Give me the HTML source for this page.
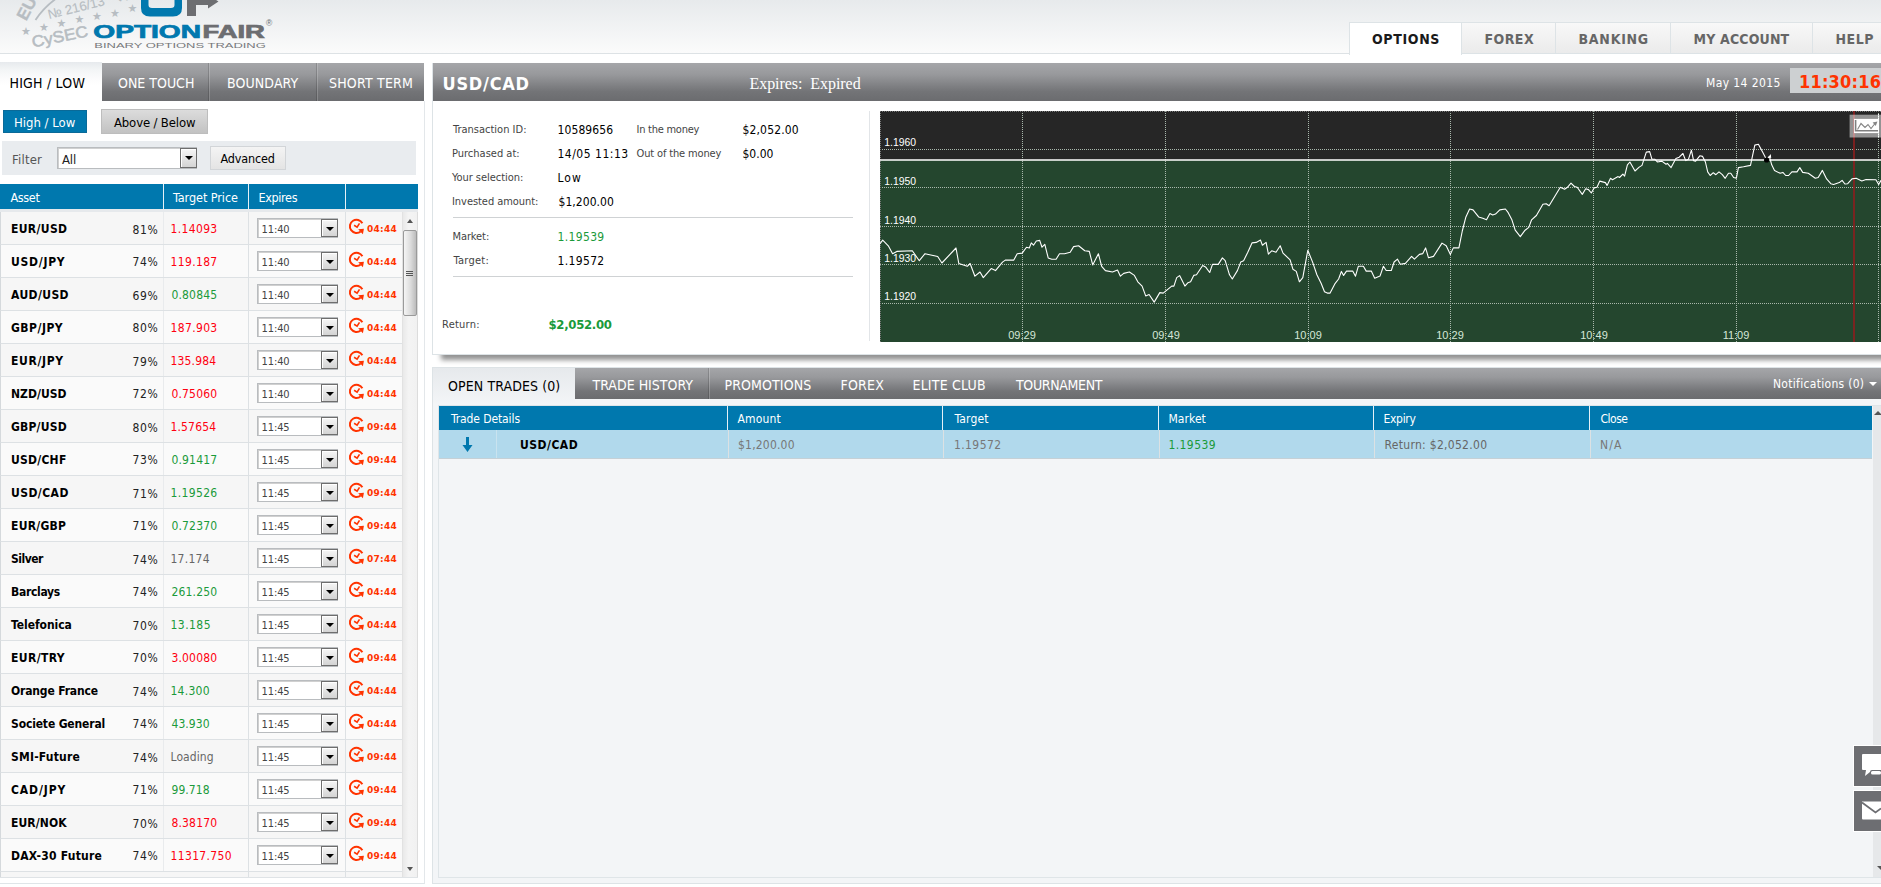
<!DOCTYPE html>
<html><head><meta charset="utf-8"><title>OptionFair</title>
<style>
*{box-sizing:border-box;margin:0;padding:0}
html,body{width:1881px;height:887px;overflow:hidden;background:#fff}
body{position:relative;font-family:'DejaVu Sans Condensed','DejaVu Sans','Liberation Sans',sans-serif;font-size:12px;color:#000}
.a{position:absolute;white-space:pre;line-height:1}
.hdr{left:0;top:0;width:1881px;height:53px;background:linear-gradient(#e7eaec,#fbfbfb)}
.hline{left:0;top:53px;width:1881px;height:1px;background:#dde2e5}
.nt{top:22px;height:32px;border:1px solid #dde3e6;border-left:none;background:linear-gradient(#f8f8f8,#ebebeb)}
.nt.act{background:#fff;border-left:1px solid #dde3e6;border-bottom:none;height:33px}
.dk{background:linear-gradient(#a5a6a9,#98999c 30%,#737477 75%,#6b6c6f)}
.th{background:#0078ae}
.row{left:0;width:402px;height:33px;background:#f6f6f6;border-bottom:1px solid #dde1e4;border-left:1px solid #d5d9dc}
.row.alt{background:#fafafa}
.vl{width:1px;background:#dde1e4}
.sel{background:#fff;border:1px solid #b9bcbf;box-shadow:inset 1px 1px 0 #d0d0d0}
.dd{background:linear-gradient(#f6f6f6,#d4d4d4);border:1px solid #6e6e6e;box-shadow:inset 1px 1px 0 #fff}
.dd:after{content:"";position:absolute;left:4px;top:7px;border:4px solid transparent;border-top:4px solid #000;border-bottom:none}
</style></head>
<body>
<div class="a hdr"></div><div class="a hline"></div>
<svg class="a" style="left:0;top:0" width="300" height="53" viewBox="0 0 300 53">
<g fill="#b7bdc2" stroke="#b7bdc2" font-family="'Liberation Sans',sans-serif">
<text font-size="17" font-weight="bold" stroke-width="0.3" transform="translate(26.3,21.6) rotate(-62)">EU</text>
<path d="M35.5 20 Q44 7 57 -2" stroke-width="1.8" fill="none"/>
<text font-size="13" stroke-width="0.15" transform="translate(49,19) rotate(-14)" textLength="58" lengthAdjust="spacingAndGlyphs">№ 216/13</text>
<text font-size="16" stroke-width="0.55" transform="translate(33,47.5) rotate(-11.5)" textLength="57" lengthAdjust="spacingAndGlyphs">CySEC</text>
<g stroke="none"><text x="26" y="35" font-size="11" text-anchor="middle" font-family="'DejaVu Sans',sans-serif">★</text><text x="44" y="31" font-size="11" text-anchor="middle" font-family="'DejaVu Sans',sans-serif">★</text><text x="61.5" y="27" font-size="11" text-anchor="middle" font-family="'DejaVu Sans',sans-serif">★</text><text x="79.5" y="23" font-size="11" text-anchor="middle" font-family="'DejaVu Sans',sans-serif">★</text><text x="97" y="20" font-size="11" text-anchor="middle" font-family="'DejaVu Sans',sans-serif">★</text><text x="115" y="16.5" font-size="11" text-anchor="middle" font-family="'DejaVu Sans',sans-serif">★</text><text x="132.5" y="12" font-size="11" text-anchor="middle" font-family="'DejaVu Sans',sans-serif">★</text></g>
<text font-size="15" font-weight="bold" stroke="none" transform="translate(118,0) rotate(28)">F</text>
</g>
<path d="M141 -10 V8 Q141 16.5 150 16.5 H173 Q182 16.5 182 8 V-10 H174.5 V5 Q174.5 8 171 8 H152 Q148.5 8 148.5 5 V-10 Z" fill="#0078ae"/>
<path d="M187 -3 H208 V-5 L218.5 1.5 L208 8.5 V5 H196 V16 H187 Z" fill="#6d6e71"/>
<g font-family="'Liberation Sans',sans-serif" font-weight="bold">
<text x="0" y="0" font-size="17.6" fill="#0078ae" stroke="#0078ae" stroke-width="0.7" transform="translate(93.3,37.6) scale(1.36,1)" textLength="79.2" lengthAdjust="spacingAndGlyphs">OPTION</text>
<text x="0" y="0" font-size="17.6" fill="#6d6e71" stroke="#6d6e71" stroke-width="0.7" transform="translate(202.4,37.6) scale(1.36,1)" textLength="45.9" lengthAdjust="spacingAndGlyphs">FAIR</text>
</g>
<text x="266" y="25.5" font-size="8.5" fill="#6d6e71" font-family="'Liberation Sans',sans-serif">®</text>
<text x="0" y="0" font-size="7.6" fill="#77787b" font-family="'Liberation Sans',sans-serif" transform="translate(94.3,47.5) scale(1.45,1)" textLength="118.3" lengthAdjust="spacingAndGlyphs">BINARY OPTIONS TRADING</text>
</svg>
<div class="a nt act" style="left:1349px;width:113px"></div>
<div class="a" style="left:1372px;top:32px;font-size:14px;color:#1a1a1a;font-weight:bold;letter-spacing:0.65px">OPTIONS</div>
<div class="a nt" style="left:1462px;width:94px"></div>
<div class="a" style="left:1484.5px;top:32px;font-size:14px;color:#666;font-weight:bold;letter-spacing:0.45px">FOREX</div>
<div class="a nt" style="left:1556px;width:115px"></div>
<div class="a" style="left:1578.5px;top:32px;font-size:14px;color:#666;font-weight:bold;letter-spacing:0.75px">BANKING</div>
<div class="a nt" style="left:1671px;width:142px"></div>
<div class="a" style="left:1693.5px;top:32px;font-size:14px;color:#666;font-weight:bold;letter-spacing:0.15px">MY ACCOUNT</div>
<div class="a nt" style="left:1813px;width:87px"></div>
<div class="a" style="left:1835.5px;top:32px;font-size:14px;color:#666;font-weight:bold;letter-spacing:0.5px">HELP</div>
<div class="a" style="left:0;top:101px;width:425px;height:783px;border-right:1px solid #e3e7ea;border-bottom:1px solid #dfe5e8"></div>
<div class="a dk" style="left:102px;top:63px;width:322px;height:38px;"></div>
<div class="a" style="left:0px;top:62px;width:102px;height:39px;background:linear-gradient(#e7eaed,#f3f5f6 20%,#fbfbfc 42%,#fff 60%)"></div>
<div class="a" style="left:209px;top:63px;width:1px;height:38px;background:rgba(255,255,255,.18);box-shadow:-1px 0 0 rgba(0,0,0,.15)"></div>
<div class="a" style="left:317px;top:63px;width:1px;height:38px;background:rgba(255,255,255,.18);box-shadow:-1px 0 0 rgba(0,0,0,.15)"></div>
<div class="a" style="left:9.5px;top:76px;font-size:14px;color:#000;letter-spacing:0.2px">HIGH / LOW</div>
<div class="a" style="left:118px;top:76px;font-size:14px;color:#fff">ONE TOUCH</div>
<div class="a" style="left:227px;top:76px;font-size:14px;color:#fff;letter-spacing:0.1px">BOUNDARY</div>
<div class="a" style="left:329px;top:76px;font-size:14px;color:#fff;letter-spacing:0.2px">SHORT TERM</div>
<div class="a" style="left:3px;top:110px;width:84px;height:23px;background:#0078ae;border:1px solid #0a6a98"></div>
<div class="a" style="left:14px;top:116px;font-size:13px;color:#fff">High / Low</div>
<div class="a" style="left:101px;top:109px;width:107px;height:25px;background:linear-gradient(#dcdcdc,#c2c2c2);border:1px solid #bdbdbd"></div>
<div class="a" style="left:114px;top:116px;font-size:13px;color:#000;letter-spacing:-0.15px">Above / Below</div>
<div class="a" style="left:2px;top:141px;width:414px;height:34px;background:#e9ecef"></div>
<div class="a" style="left:12px;top:153px;font-size:13px;color:#555;letter-spacing:0.2px">Filter</div>
<div class="a sel" style="left:57px;top:147px;width:140px;height:22px;"></div>
<div class="a" style="left:62px;top:153px;font-size:13px;color:#222;letter-spacing:-0.15px">All</div>
<div class="a dd" style="left:180px;top:148px;width:17px;height:20px;"></div>
<div class="a" style="left:210px;top:146px;width:76px;height:24px;background:linear-gradient(#f4f4f4,#e4e4e4);border:1px solid #d2d5d8"></div>
<div class="a" style="left:220.5px;top:153px;font-size:12.5px;color:#000;letter-spacing:-0.15px">Advanced</div>
<div class="a th" style="left:0px;top:184px;width:418px;height:25px;"></div>
<div class="a" style="left:163px;top:184px;width:1px;height:25px;background:#e6f1f7"></div>
<div class="a" style="left:248px;top:184px;width:1px;height:25px;background:#e6f1f7"></div>
<div class="a" style="left:345px;top:184px;width:1px;height:25px;background:#e6f1f7"></div>
<div class="a" style="left:10.5px;top:192px;font-size:12.5px;color:#fff;letter-spacing:-0.35px">Asset</div>
<div class="a" style="left:173px;top:192px;font-size:12.5px;color:#fff;letter-spacing:-0.05px">Target Price</div>
<div class="a" style="left:258.5px;top:192px;font-size:12.5px;color:#fff;letter-spacing:-0.35px">Expires</div>
<div class="a" style="left:0px;top:209px;width:418px;height:3px;background:#e6e9ec"></div>
<div class="a row" style="top:212px"></div>
<div class="a vl" style="left:248px;top:212px;width:1px;height:32px;"></div>
<div class="a vl" style="left:345px;top:212px;width:1px;height:32px;"></div>
<div class="a" style="left:163px;top:212px;width:1px;height:32px;background:#e9ebed"></div>
<div class="a" style="left:11px;top:223px;font-size:12px;color:#000;font-weight:bold;letter-spacing:0.35px">EUR/USD</div>
<div class="a" style="left:132.5px;top:224px;font-size:12px;color:#222;letter-spacing:0.65px">81%</div>
<div class="a" style="left:170.5px;top:223px;font-size:12px;color:#f01;letter-spacing:0.35px">1.14093</div>
<div class="a sel" style="left:257px;top:218px;width:81px;height:20px;"></div>
<div class="a" style="left:261.5px;top:224px;font-size:11px;color:#444;letter-spacing:-0.1px">11:40</div>
<div class="a dd" style="left:321px;top:219px;width:17px;height:18px;"></div>
<svg class="a" style="left:347px;top:217px" width="19" height="19" viewBox="0 0 19 19"><path d="M15.35 6.29 A6.6 6.6 0 1 0 13.74 14.4" fill="none" stroke="#f30" stroke-width="2"/><path d="M11.2 12.2 L16.9 11.8 L15.9 17.2 Z" fill="#f30"/><path d="M7.1 8.3 L10.1 10.2 L12.5 6.4" fill="none" stroke="#f30" stroke-width="1.6"/></svg>
<div class="a" style="left:367px;top:225px;font-size:9px;color:#f30;font-weight:bold;font-family:'DejaVu Sans','Liberation Sans',sans-serif;letter-spacing:0.3px">04:44</div>
<div class="a row alt" style="top:245px"></div>
<div class="a vl" style="left:248px;top:245px;width:1px;height:32px;"></div>
<div class="a vl" style="left:345px;top:245px;width:1px;height:32px;"></div>
<div class="a" style="left:163px;top:245px;width:1px;height:32px;background:#e9ebed"></div>
<div class="a" style="left:11px;top:256px;font-size:12px;color:#000;font-weight:bold;letter-spacing:0.75px">USD/JPY</div>
<div class="a" style="left:132.5px;top:256px;font-size:12px;color:#222;letter-spacing:0.65px">74%</div>
<div class="a" style="left:170.5px;top:256px;font-size:12px;color:#f01;letter-spacing:0.35px">119.187</div>
<div class="a sel" style="left:257px;top:251px;width:81px;height:20px;"></div>
<div class="a" style="left:261.5px;top:257px;font-size:11px;color:#444;letter-spacing:-0.1px">11:40</div>
<div class="a dd" style="left:321px;top:252px;width:17px;height:18px;"></div>
<svg class="a" style="left:347px;top:250px" width="19" height="19" viewBox="0 0 19 19"><path d="M15.35 6.29 A6.6 6.6 0 1 0 13.74 14.4" fill="none" stroke="#f30" stroke-width="2"/><path d="M11.2 12.2 L16.9 11.8 L15.9 17.2 Z" fill="#f30"/><path d="M7.1 8.3 L10.1 10.2 L12.5 6.4" fill="none" stroke="#f30" stroke-width="1.6"/></svg>
<div class="a" style="left:367px;top:258px;font-size:9px;color:#f30;font-weight:bold;font-family:'DejaVu Sans','Liberation Sans',sans-serif;letter-spacing:0.3px">04:44</div>
<div class="a row" style="top:278px"></div>
<div class="a vl" style="left:248px;top:278px;width:1px;height:32px;"></div>
<div class="a vl" style="left:345px;top:278px;width:1px;height:32px;"></div>
<div class="a" style="left:163px;top:278px;width:1px;height:32px;background:#e9ebed"></div>
<div class="a" style="left:11px;top:289px;font-size:12px;color:#000;font-weight:bold;letter-spacing:0.4px">AUD/USD</div>
<div class="a" style="left:132.5px;top:290px;font-size:12px;color:#222;letter-spacing:0.65px">69%</div>
<div class="a" style="left:171.5px;top:289px;font-size:12px;color:#1a9a3a;letter-spacing:0.15px">0.80845</div>
<div class="a sel" style="left:257px;top:284px;width:81px;height:20px;"></div>
<div class="a" style="left:261.5px;top:290px;font-size:11px;color:#444;letter-spacing:-0.1px">11:40</div>
<div class="a dd" style="left:321px;top:285px;width:17px;height:18px;"></div>
<svg class="a" style="left:347px;top:283px" width="19" height="19" viewBox="0 0 19 19"><path d="M15.35 6.29 A6.6 6.6 0 1 0 13.74 14.4" fill="none" stroke="#f30" stroke-width="2"/><path d="M11.2 12.2 L16.9 11.8 L15.9 17.2 Z" fill="#f30"/><path d="M7.1 8.3 L10.1 10.2 L12.5 6.4" fill="none" stroke="#f30" stroke-width="1.6"/></svg>
<div class="a" style="left:367px;top:291px;font-size:9px;color:#f30;font-weight:bold;font-family:'DejaVu Sans','Liberation Sans',sans-serif;letter-spacing:0.3px">04:44</div>
<div class="a row alt" style="top:311px"></div>
<div class="a vl" style="left:248px;top:311px;width:1px;height:32px;"></div>
<div class="a vl" style="left:345px;top:311px;width:1px;height:32px;"></div>
<div class="a" style="left:163px;top:311px;width:1px;height:32px;background:#e9ebed"></div>
<div class="a" style="left:11px;top:322px;font-size:12px;color:#000;font-weight:bold;letter-spacing:0.5px">GBP/JPY</div>
<div class="a" style="left:132.5px;top:322px;font-size:12px;color:#222;letter-spacing:0.65px">80%</div>
<div class="a" style="left:170.5px;top:322px;font-size:12px;color:#f01;letter-spacing:0.35px">187.903</div>
<div class="a sel" style="left:257px;top:317px;width:81px;height:20px;"></div>
<div class="a" style="left:261.5px;top:323px;font-size:11px;color:#444;letter-spacing:-0.1px">11:40</div>
<div class="a dd" style="left:321px;top:318px;width:17px;height:18px;"></div>
<svg class="a" style="left:347px;top:316px" width="19" height="19" viewBox="0 0 19 19"><path d="M15.35 6.29 A6.6 6.6 0 1 0 13.74 14.4" fill="none" stroke="#f30" stroke-width="2"/><path d="M11.2 12.2 L16.9 11.8 L15.9 17.2 Z" fill="#f30"/><path d="M7.1 8.3 L10.1 10.2 L12.5 6.4" fill="none" stroke="#f30" stroke-width="1.6"/></svg>
<div class="a" style="left:367px;top:324px;font-size:9px;color:#f30;font-weight:bold;font-family:'DejaVu Sans','Liberation Sans',sans-serif;letter-spacing:0.3px">04:44</div>
<div class="a row" style="top:344px"></div>
<div class="a vl" style="left:248px;top:344px;width:1px;height:32px;"></div>
<div class="a vl" style="left:345px;top:344px;width:1px;height:32px;"></div>
<div class="a" style="left:163px;top:344px;width:1px;height:32px;background:#e9ebed"></div>
<div class="a" style="left:11px;top:355px;font-size:12px;color:#000;font-weight:bold;letter-spacing:0.65px">EUR/JPY</div>
<div class="a" style="left:132.5px;top:356px;font-size:12px;color:#222;letter-spacing:0.65px">79%</div>
<div class="a" style="left:170.5px;top:355px;font-size:12px;color:#f01;letter-spacing:0.15px">135.984</div>
<div class="a sel" style="left:257px;top:350px;width:81px;height:20px;"></div>
<div class="a" style="left:261.5px;top:356px;font-size:11px;color:#444;letter-spacing:-0.1px">11:40</div>
<div class="a dd" style="left:321px;top:351px;width:17px;height:18px;"></div>
<svg class="a" style="left:347px;top:349px" width="19" height="19" viewBox="0 0 19 19"><path d="M15.35 6.29 A6.6 6.6 0 1 0 13.74 14.4" fill="none" stroke="#f30" stroke-width="2"/><path d="M11.2 12.2 L16.9 11.8 L15.9 17.2 Z" fill="#f30"/><path d="M7.1 8.3 L10.1 10.2 L12.5 6.4" fill="none" stroke="#f30" stroke-width="1.6"/></svg>
<div class="a" style="left:367px;top:357px;font-size:9px;color:#f30;font-weight:bold;font-family:'DejaVu Sans','Liberation Sans',sans-serif;letter-spacing:0.3px">04:44</div>
<div class="a row alt" style="top:377px"></div>
<div class="a vl" style="left:248px;top:377px;width:1px;height:32px;"></div>
<div class="a vl" style="left:345px;top:377px;width:1px;height:32px;"></div>
<div class="a" style="left:163px;top:377px;width:1px;height:32px;background:#e9ebed"></div>
<div class="a" style="left:11px;top:388px;font-size:12px;color:#000;font-weight:bold;letter-spacing:0.05px">NZD/USD</div>
<div class="a" style="left:132.5px;top:388px;font-size:12px;color:#222;letter-spacing:0.65px">72%</div>
<div class="a" style="left:171.5px;top:388px;font-size:12px;color:#f01;letter-spacing:0.15px">0.75060</div>
<div class="a sel" style="left:257px;top:383px;width:81px;height:20px;"></div>
<div class="a" style="left:261.5px;top:389px;font-size:11px;color:#444;letter-spacing:-0.1px">11:40</div>
<div class="a dd" style="left:321px;top:384px;width:17px;height:18px;"></div>
<svg class="a" style="left:347px;top:382px" width="19" height="19" viewBox="0 0 19 19"><path d="M15.35 6.29 A6.6 6.6 0 1 0 13.74 14.4" fill="none" stroke="#f30" stroke-width="2"/><path d="M11.2 12.2 L16.9 11.8 L15.9 17.2 Z" fill="#f30"/><path d="M7.1 8.3 L10.1 10.2 L12.5 6.4" fill="none" stroke="#f30" stroke-width="1.6"/></svg>
<div class="a" style="left:367px;top:390px;font-size:9px;color:#f30;font-weight:bold;font-family:'DejaVu Sans','Liberation Sans',sans-serif;letter-spacing:0.3px">04:44</div>
<div class="a row" style="top:410px"></div>
<div class="a vl" style="left:248px;top:410px;width:1px;height:32px;"></div>
<div class="a vl" style="left:345px;top:410px;width:1px;height:32px;"></div>
<div class="a" style="left:163px;top:410px;width:1px;height:32px;background:#e9ebed"></div>
<div class="a" style="left:11px;top:421px;font-size:12px;color:#000;font-weight:bold;letter-spacing:0.2px">GBP/USD</div>
<div class="a" style="left:132.5px;top:422px;font-size:12px;color:#222;letter-spacing:0.65px">80%</div>
<div class="a" style="left:170.5px;top:421px;font-size:12px;color:#f01;letter-spacing:0.15px">1.57654</div>
<div class="a sel" style="left:257px;top:416px;width:81px;height:20px;"></div>
<div class="a" style="left:261.5px;top:422px;font-size:11px;color:#444;letter-spacing:-0.1px">11:45</div>
<div class="a dd" style="left:321px;top:417px;width:17px;height:18px;"></div>
<svg class="a" style="left:347px;top:415px" width="19" height="19" viewBox="0 0 19 19"><path d="M15.35 6.29 A6.6 6.6 0 1 0 13.74 14.4" fill="none" stroke="#f30" stroke-width="2"/><path d="M11.2 12.2 L16.9 11.8 L15.9 17.2 Z" fill="#f30"/><path d="M7.1 8.3 L10.1 10.2 L12.5 6.4" fill="none" stroke="#f30" stroke-width="1.6"/></svg>
<div class="a" style="left:367px;top:423px;font-size:9px;color:#f30;font-weight:bold;font-family:'DejaVu Sans','Liberation Sans',sans-serif;letter-spacing:0.3px">09:44</div>
<div class="a row alt" style="top:443px"></div>
<div class="a vl" style="left:248px;top:443px;width:1px;height:32px;"></div>
<div class="a vl" style="left:345px;top:443px;width:1px;height:32px;"></div>
<div class="a" style="left:163px;top:443px;width:1px;height:32px;background:#e9ebed"></div>
<div class="a" style="left:11px;top:454px;font-size:12px;color:#000;font-weight:bold;letter-spacing:0.25px">USD/CHF</div>
<div class="a" style="left:132.5px;top:454px;font-size:12px;color:#222;letter-spacing:0.65px">73%</div>
<div class="a" style="left:171.5px;top:454px;font-size:12px;color:#1a9a3a;letter-spacing:0.15px">0.91417</div>
<div class="a sel" style="left:257px;top:449px;width:81px;height:20px;"></div>
<div class="a" style="left:261.5px;top:455px;font-size:11px;color:#444;letter-spacing:-0.1px">11:45</div>
<div class="a dd" style="left:321px;top:450px;width:17px;height:18px;"></div>
<svg class="a" style="left:347px;top:448px" width="19" height="19" viewBox="0 0 19 19"><path d="M15.35 6.29 A6.6 6.6 0 1 0 13.74 14.4" fill="none" stroke="#f30" stroke-width="2"/><path d="M11.2 12.2 L16.9 11.8 L15.9 17.2 Z" fill="#f30"/><path d="M7.1 8.3 L10.1 10.2 L12.5 6.4" fill="none" stroke="#f30" stroke-width="1.6"/></svg>
<div class="a" style="left:367px;top:456px;font-size:9px;color:#f30;font-weight:bold;font-family:'DejaVu Sans','Liberation Sans',sans-serif;letter-spacing:0.3px">09:44</div>
<div class="a row" style="top:476px"></div>
<div class="a vl" style="left:248px;top:476px;width:1px;height:32px;"></div>
<div class="a vl" style="left:345px;top:476px;width:1px;height:32px;"></div>
<div class="a" style="left:163px;top:476px;width:1px;height:32px;background:#e9ebed"></div>
<div class="a" style="left:11px;top:487px;font-size:12px;color:#000;font-weight:bold;letter-spacing:0.45px">USD/CAD</div>
<div class="a" style="left:132.5px;top:488px;font-size:12px;color:#222;letter-spacing:0.65px">71%</div>
<div class="a" style="left:170.5px;top:487px;font-size:12px;color:#1a9a3a;letter-spacing:0.35px">1.19526</div>
<div class="a sel" style="left:257px;top:482px;width:81px;height:20px;"></div>
<div class="a" style="left:261.5px;top:488px;font-size:11px;color:#444;letter-spacing:-0.1px">11:45</div>
<div class="a dd" style="left:321px;top:483px;width:17px;height:18px;"></div>
<svg class="a" style="left:347px;top:481px" width="19" height="19" viewBox="0 0 19 19"><path d="M15.35 6.29 A6.6 6.6 0 1 0 13.74 14.4" fill="none" stroke="#f30" stroke-width="2"/><path d="M11.2 12.2 L16.9 11.8 L15.9 17.2 Z" fill="#f30"/><path d="M7.1 8.3 L10.1 10.2 L12.5 6.4" fill="none" stroke="#f30" stroke-width="1.6"/></svg>
<div class="a" style="left:367px;top:489px;font-size:9px;color:#f30;font-weight:bold;font-family:'DejaVu Sans','Liberation Sans',sans-serif;letter-spacing:0.3px">09:44</div>
<div class="a row alt" style="top:509px"></div>
<div class="a vl" style="left:248px;top:509px;width:1px;height:32px;"></div>
<div class="a vl" style="left:345px;top:509px;width:1px;height:32px;"></div>
<div class="a" style="left:163px;top:509px;width:1px;height:32px;background:#e9ebed"></div>
<div class="a" style="left:11px;top:520px;font-size:12px;color:#000;font-weight:bold;letter-spacing:0.25px">EUR/GBP</div>
<div class="a" style="left:132.5px;top:520px;font-size:12px;color:#222;letter-spacing:0.65px">71%</div>
<div class="a" style="left:171.5px;top:520px;font-size:12px;color:#1a9a3a;letter-spacing:0.15px">0.72370</div>
<div class="a sel" style="left:257px;top:515px;width:81px;height:20px;"></div>
<div class="a" style="left:261.5px;top:521px;font-size:11px;color:#444;letter-spacing:-0.1px">11:45</div>
<div class="a dd" style="left:321px;top:516px;width:17px;height:18px;"></div>
<svg class="a" style="left:347px;top:514px" width="19" height="19" viewBox="0 0 19 19"><path d="M15.35 6.29 A6.6 6.6 0 1 0 13.74 14.4" fill="none" stroke="#f30" stroke-width="2"/><path d="M11.2 12.2 L16.9 11.8 L15.9 17.2 Z" fill="#f30"/><path d="M7.1 8.3 L10.1 10.2 L12.5 6.4" fill="none" stroke="#f30" stroke-width="1.6"/></svg>
<div class="a" style="left:367px;top:522px;font-size:9px;color:#f30;font-weight:bold;font-family:'DejaVu Sans','Liberation Sans',sans-serif;letter-spacing:0.3px">09:44</div>
<div class="a row" style="top:542px"></div>
<div class="a vl" style="left:248px;top:542px;width:1px;height:32px;"></div>
<div class="a vl" style="left:345px;top:542px;width:1px;height:32px;"></div>
<div class="a" style="left:163px;top:542px;width:1px;height:32px;background:#e9ebed"></div>
<div class="a" style="left:11px;top:553px;font-size:12px;color:#000;font-weight:bold;letter-spacing:-0.5px">Silver</div>
<div class="a" style="left:132.5px;top:554px;font-size:12px;color:#222;letter-spacing:0.65px">74%</div>
<div class="a" style="left:170.5px;top:553px;font-size:12px;color:#666;letter-spacing:0.25px">17.174</div>
<div class="a sel" style="left:257px;top:548px;width:81px;height:20px;"></div>
<div class="a" style="left:261.5px;top:554px;font-size:11px;color:#444;letter-spacing:-0.1px">11:45</div>
<div class="a dd" style="left:321px;top:549px;width:17px;height:18px;"></div>
<svg class="a" style="left:347px;top:547px" width="19" height="19" viewBox="0 0 19 19"><path d="M15.35 6.29 A6.6 6.6 0 1 0 13.74 14.4" fill="none" stroke="#f30" stroke-width="2"/><path d="M11.2 12.2 L16.9 11.8 L15.9 17.2 Z" fill="#f30"/><path d="M7.1 8.3 L10.1 10.2 L12.5 6.4" fill="none" stroke="#f30" stroke-width="1.6"/></svg>
<div class="a" style="left:367px;top:555px;font-size:9px;color:#f30;font-weight:bold;font-family:'DejaVu Sans','Liberation Sans',sans-serif;letter-spacing:0.3px">07:44</div>
<div class="a row alt" style="top:575px"></div>
<div class="a vl" style="left:248px;top:575px;width:1px;height:32px;"></div>
<div class="a vl" style="left:345px;top:575px;width:1px;height:32px;"></div>
<div class="a" style="left:163px;top:575px;width:1px;height:32px;background:#e9ebed"></div>
<div class="a" style="left:11px;top:586px;font-size:12px;color:#000;font-weight:bold;letter-spacing:-0.3px">Barclays</div>
<div class="a" style="left:132.5px;top:586px;font-size:12px;color:#222;letter-spacing:0.65px">74%</div>
<div class="a" style="left:171.5px;top:586px;font-size:12px;color:#1a9a3a;letter-spacing:0.15px">261.250</div>
<div class="a sel" style="left:257px;top:581px;width:81px;height:20px;"></div>
<div class="a" style="left:261.5px;top:587px;font-size:11px;color:#444;letter-spacing:-0.1px">11:45</div>
<div class="a dd" style="left:321px;top:582px;width:17px;height:18px;"></div>
<svg class="a" style="left:347px;top:580px" width="19" height="19" viewBox="0 0 19 19"><path d="M15.35 6.29 A6.6 6.6 0 1 0 13.74 14.4" fill="none" stroke="#f30" stroke-width="2"/><path d="M11.2 12.2 L16.9 11.8 L15.9 17.2 Z" fill="#f30"/><path d="M7.1 8.3 L10.1 10.2 L12.5 6.4" fill="none" stroke="#f30" stroke-width="1.6"/></svg>
<div class="a" style="left:367px;top:588px;font-size:9px;color:#f30;font-weight:bold;font-family:'DejaVu Sans','Liberation Sans',sans-serif;letter-spacing:0.3px">04:44</div>
<div class="a row" style="top:608px"></div>
<div class="a vl" style="left:248px;top:608px;width:1px;height:32px;"></div>
<div class="a vl" style="left:345px;top:608px;width:1px;height:32px;"></div>
<div class="a" style="left:163px;top:608px;width:1px;height:32px;background:#e9ebed"></div>
<div class="a" style="left:11px;top:619px;font-size:12px;color:#000;font-weight:bold;letter-spacing:-0.05px">Telefonica</div>
<div class="a" style="left:132.5px;top:620px;font-size:12px;color:#222;letter-spacing:0.65px">70%</div>
<div class="a" style="left:170.5px;top:619px;font-size:12px;color:#1a9a3a;letter-spacing:0.45px">13.185</div>
<div class="a sel" style="left:257px;top:614px;width:81px;height:20px;"></div>
<div class="a" style="left:261.5px;top:620px;font-size:11px;color:#444;letter-spacing:-0.1px">11:45</div>
<div class="a dd" style="left:321px;top:615px;width:17px;height:18px;"></div>
<svg class="a" style="left:347px;top:613px" width="19" height="19" viewBox="0 0 19 19"><path d="M15.35 6.29 A6.6 6.6 0 1 0 13.74 14.4" fill="none" stroke="#f30" stroke-width="2"/><path d="M11.2 12.2 L16.9 11.8 L15.9 17.2 Z" fill="#f30"/><path d="M7.1 8.3 L10.1 10.2 L12.5 6.4" fill="none" stroke="#f30" stroke-width="1.6"/></svg>
<div class="a" style="left:367px;top:621px;font-size:9px;color:#f30;font-weight:bold;font-family:'DejaVu Sans','Liberation Sans',sans-serif;letter-spacing:0.3px">04:44</div>
<div class="a row alt" style="top:641px"></div>
<div class="a vl" style="left:248px;top:641px;width:1px;height:32px;"></div>
<div class="a vl" style="left:345px;top:641px;width:1px;height:32px;"></div>
<div class="a" style="left:163px;top:641px;width:1px;height:32px;background:#e9ebed"></div>
<div class="a" style="left:11px;top:652px;font-size:12px;color:#000;font-weight:bold;letter-spacing:0.4px">EUR/TRY</div>
<div class="a" style="left:132.5px;top:652px;font-size:12px;color:#222;letter-spacing:0.65px">70%</div>
<div class="a" style="left:171.5px;top:652px;font-size:12px;color:#f01;letter-spacing:0.15px">3.00080</div>
<div class="a sel" style="left:257px;top:647px;width:81px;height:20px;"></div>
<div class="a" style="left:261.5px;top:653px;font-size:11px;color:#444;letter-spacing:-0.1px">11:45</div>
<div class="a dd" style="left:321px;top:648px;width:17px;height:18px;"></div>
<svg class="a" style="left:347px;top:646px" width="19" height="19" viewBox="0 0 19 19"><path d="M15.35 6.29 A6.6 6.6 0 1 0 13.74 14.4" fill="none" stroke="#f30" stroke-width="2"/><path d="M11.2 12.2 L16.9 11.8 L15.9 17.2 Z" fill="#f30"/><path d="M7.1 8.3 L10.1 10.2 L12.5 6.4" fill="none" stroke="#f30" stroke-width="1.6"/></svg>
<div class="a" style="left:367px;top:654px;font-size:9px;color:#f30;font-weight:bold;font-family:'DejaVu Sans','Liberation Sans',sans-serif;letter-spacing:0.3px">09:44</div>
<div class="a row" style="top:674px"></div>
<div class="a vl" style="left:248px;top:674px;width:1px;height:32px;"></div>
<div class="a vl" style="left:345px;top:674px;width:1px;height:32px;"></div>
<div class="a" style="left:163px;top:674px;width:1px;height:32px;background:#e9ebed"></div>
<div class="a" style="left:11px;top:685px;font-size:12px;color:#000;font-weight:bold;letter-spacing:-0.15px">Orange France</div>
<div class="a" style="left:132.5px;top:686px;font-size:12px;color:#222;letter-spacing:0.65px">74%</div>
<div class="a" style="left:170.5px;top:685px;font-size:12px;color:#1a9a3a;letter-spacing:0.25px">14.300</div>
<div class="a sel" style="left:257px;top:680px;width:81px;height:20px;"></div>
<div class="a" style="left:261.5px;top:686px;font-size:11px;color:#444;letter-spacing:-0.1px">11:45</div>
<div class="a dd" style="left:321px;top:681px;width:17px;height:18px;"></div>
<svg class="a" style="left:347px;top:679px" width="19" height="19" viewBox="0 0 19 19"><path d="M15.35 6.29 A6.6 6.6 0 1 0 13.74 14.4" fill="none" stroke="#f30" stroke-width="2"/><path d="M11.2 12.2 L16.9 11.8 L15.9 17.2 Z" fill="#f30"/><path d="M7.1 8.3 L10.1 10.2 L12.5 6.4" fill="none" stroke="#f30" stroke-width="1.6"/></svg>
<div class="a" style="left:367px;top:687px;font-size:9px;color:#f30;font-weight:bold;font-family:'DejaVu Sans','Liberation Sans',sans-serif;letter-spacing:0.3px">04:44</div>
<div class="a row alt" style="top:707px"></div>
<div class="a vl" style="left:248px;top:707px;width:1px;height:32px;"></div>
<div class="a vl" style="left:345px;top:707px;width:1px;height:32px;"></div>
<div class="a" style="left:163px;top:707px;width:1px;height:32px;background:#e9ebed"></div>
<div class="a" style="left:11px;top:718px;font-size:12px;color:#000;font-weight:bold;letter-spacing:-0.15px">Societe General</div>
<div class="a" style="left:132.5px;top:718px;font-size:12px;color:#222;letter-spacing:0.65px">74%</div>
<div class="a" style="left:171.5px;top:718px;font-size:12px;color:#1a9a3a;letter-spacing:0.05px">43.930</div>
<div class="a sel" style="left:257px;top:713px;width:81px;height:20px;"></div>
<div class="a" style="left:261.5px;top:719px;font-size:11px;color:#444;letter-spacing:-0.1px">11:45</div>
<div class="a dd" style="left:321px;top:714px;width:17px;height:18px;"></div>
<svg class="a" style="left:347px;top:712px" width="19" height="19" viewBox="0 0 19 19"><path d="M15.35 6.29 A6.6 6.6 0 1 0 13.74 14.4" fill="none" stroke="#f30" stroke-width="2"/><path d="M11.2 12.2 L16.9 11.8 L15.9 17.2 Z" fill="#f30"/><path d="M7.1 8.3 L10.1 10.2 L12.5 6.4" fill="none" stroke="#f30" stroke-width="1.6"/></svg>
<div class="a" style="left:367px;top:720px;font-size:9px;color:#f30;font-weight:bold;font-family:'DejaVu Sans','Liberation Sans',sans-serif;letter-spacing:0.3px">04:44</div>
<div class="a row" style="top:740px"></div>
<div class="a vl" style="left:248px;top:740px;width:1px;height:32px;"></div>
<div class="a vl" style="left:345px;top:740px;width:1px;height:32px;"></div>
<div class="a" style="left:163px;top:740px;width:1px;height:32px;background:#e9ebed"></div>
<div class="a" style="left:11px;top:751px;font-size:12px;color:#000;font-weight:bold;letter-spacing:0.2px">SMI-Future</div>
<div class="a" style="left:132.5px;top:752px;font-size:12px;color:#222;letter-spacing:0.65px">74%</div>
<div class="a" style="left:170.5px;top:751px;font-size:12px;color:#666;letter-spacing:0.1px">Loading</div>
<div class="a sel" style="left:257px;top:746px;width:81px;height:20px;"></div>
<div class="a" style="left:261.5px;top:752px;font-size:11px;color:#444;letter-spacing:-0.1px">11:45</div>
<div class="a dd" style="left:321px;top:747px;width:17px;height:18px;"></div>
<svg class="a" style="left:347px;top:745px" width="19" height="19" viewBox="0 0 19 19"><path d="M15.35 6.29 A6.6 6.6 0 1 0 13.74 14.4" fill="none" stroke="#f30" stroke-width="2"/><path d="M11.2 12.2 L16.9 11.8 L15.9 17.2 Z" fill="#f30"/><path d="M7.1 8.3 L10.1 10.2 L12.5 6.4" fill="none" stroke="#f30" stroke-width="1.6"/></svg>
<div class="a" style="left:367px;top:753px;font-size:9px;color:#f30;font-weight:bold;font-family:'DejaVu Sans','Liberation Sans',sans-serif;letter-spacing:0.3px">09:44</div>
<div class="a row alt" style="top:773px"></div>
<div class="a vl" style="left:248px;top:773px;width:1px;height:32px;"></div>
<div class="a vl" style="left:345px;top:773px;width:1px;height:32px;"></div>
<div class="a" style="left:163px;top:773px;width:1px;height:32px;background:#e9ebed"></div>
<div class="a" style="left:11px;top:784px;font-size:12px;color:#000;font-weight:bold;letter-spacing:0.9px">CAD/JPY</div>
<div class="a" style="left:132.5px;top:784px;font-size:12px;color:#222;letter-spacing:0.65px">71%</div>
<div class="a" style="left:171.5px;top:784px;font-size:12px;color:#1a9a3a;letter-spacing:0.05px">99.718</div>
<div class="a sel" style="left:257px;top:779px;width:81px;height:20px;"></div>
<div class="a" style="left:261.5px;top:785px;font-size:11px;color:#444;letter-spacing:-0.1px">11:45</div>
<div class="a dd" style="left:321px;top:780px;width:17px;height:18px;"></div>
<svg class="a" style="left:347px;top:778px" width="19" height="19" viewBox="0 0 19 19"><path d="M15.35 6.29 A6.6 6.6 0 1 0 13.74 14.4" fill="none" stroke="#f30" stroke-width="2"/><path d="M11.2 12.2 L16.9 11.8 L15.9 17.2 Z" fill="#f30"/><path d="M7.1 8.3 L10.1 10.2 L12.5 6.4" fill="none" stroke="#f30" stroke-width="1.6"/></svg>
<div class="a" style="left:367px;top:786px;font-size:9px;color:#f30;font-weight:bold;font-family:'DejaVu Sans','Liberation Sans',sans-serif;letter-spacing:0.3px">09:44</div>
<div class="a row" style="top:806px"></div>
<div class="a vl" style="left:248px;top:806px;width:1px;height:32px;"></div>
<div class="a vl" style="left:345px;top:806px;width:1px;height:32px;"></div>
<div class="a" style="left:163px;top:806px;width:1px;height:32px;background:#e9ebed"></div>
<div class="a" style="left:11px;top:817px;font-size:12px;color:#000;font-weight:bold;letter-spacing:0.1px">EUR/NOK</div>
<div class="a" style="left:132.5px;top:818px;font-size:12px;color:#222;letter-spacing:0.65px">70%</div>
<div class="a" style="left:171.5px;top:817px;font-size:12px;color:#f01;letter-spacing:0.15px">8.38170</div>
<div class="a sel" style="left:257px;top:812px;width:81px;height:20px;"></div>
<div class="a" style="left:261.5px;top:818px;font-size:11px;color:#444;letter-spacing:-0.1px">11:45</div>
<div class="a dd" style="left:321px;top:813px;width:17px;height:18px;"></div>
<svg class="a" style="left:347px;top:811px" width="19" height="19" viewBox="0 0 19 19"><path d="M15.35 6.29 A6.6 6.6 0 1 0 13.74 14.4" fill="none" stroke="#f30" stroke-width="2"/><path d="M11.2 12.2 L16.9 11.8 L15.9 17.2 Z" fill="#f30"/><path d="M7.1 8.3 L10.1 10.2 L12.5 6.4" fill="none" stroke="#f30" stroke-width="1.6"/></svg>
<div class="a" style="left:367px;top:819px;font-size:9px;color:#f30;font-weight:bold;font-family:'DejaVu Sans','Liberation Sans',sans-serif;letter-spacing:0.3px">09:44</div>
<div class="a row alt" style="top:839px"></div>
<div class="a vl" style="left:248px;top:839px;width:1px;height:32px;"></div>
<div class="a vl" style="left:345px;top:839px;width:1px;height:32px;"></div>
<div class="a" style="left:163px;top:839px;width:1px;height:32px;background:#e9ebed"></div>
<div class="a" style="left:11px;top:850px;font-size:12px;color:#000;font-weight:bold;letter-spacing:0.25px">DAX-30 Future</div>
<div class="a" style="left:132.5px;top:850px;font-size:12px;color:#222;letter-spacing:0.65px">74%</div>
<div class="a" style="left:170.5px;top:850px;font-size:12px;color:#f01;letter-spacing:0.35px">11317.750</div>
<div class="a sel" style="left:257px;top:845px;width:81px;height:20px;"></div>
<div class="a" style="left:261.5px;top:851px;font-size:11px;color:#444;letter-spacing:-0.1px">11:45</div>
<div class="a dd" style="left:321px;top:846px;width:17px;height:18px;"></div>
<svg class="a" style="left:347px;top:844px" width="19" height="19" viewBox="0 0 19 19"><path d="M15.35 6.29 A6.6 6.6 0 1 0 13.74 14.4" fill="none" stroke="#f30" stroke-width="2"/><path d="M11.2 12.2 L16.9 11.8 L15.9 17.2 Z" fill="#f30"/><path d="M7.1 8.3 L10.1 10.2 L12.5 6.4" fill="none" stroke="#f30" stroke-width="1.6"/></svg>
<div class="a" style="left:367px;top:852px;font-size:9px;color:#f30;font-weight:bold;font-family:'DejaVu Sans','Liberation Sans',sans-serif;letter-spacing:0.3px">09:44</div>
<div class="a row" style="top:872px;height:5px;border-bottom:none"></div>
<div class="a vl" style="left:248px;top:872px;width:1px;height:5px;"></div>
<div class="a vl" style="left:345px;top:872px;width:1px;height:5px;"></div>
<div class="a" style="left:0px;top:877px;width:418px;height:1px;background:#dfe3e6"></div>
<div class="a" style="left:402px;top:212px;width:16px;height:665px;background:linear-gradient(90deg,#e9e9e9,#f4f4f4 40%,#f1f1f1);border-left:1px solid #e2e2e2;border-right:1px solid #dcdcdc"></div>
<div class="a" style="left:407px;top:219px;border:3.5px solid transparent;border-bottom:4px solid #555;border-top:none"></div>
<div class="a" style="left:402.5px;top:230px;width:14.5px;height:86px;background:linear-gradient(90deg,#f5f5f5,#dcdcdc 55%,#bcbcbc);border:1px solid #9a9a9a;border-radius:2px"></div>
<div class="a" style="left:406px;top:271px;width:7px;height:1px;background:#555"></div>
<div class="a" style="left:406px;top:273px;width:7px;height:1px;background:#555"></div>
<div class="a" style="left:406px;top:275px;width:7px;height:1px;background:#555"></div>
<div class="a" style="left:407px;top:867px;border:3.5px solid transparent;border-top:4px solid #555;border-bottom:none"></div>
<div class="a" style="left:432px;top:63px;width:1460px;height:292px;background:#fff;border-left:1px solid #dde3e6;border-bottom:1px solid #dde3e6;box-shadow:9px 5px 5px rgba(0,0,0,.43)"></div>
<div class="a dk" style="left:433px;top:63px;width:1448px;height:38px;"></div>
<div class="a" style="left:442.5px;top:75px;font-size:18px;color:#fff;font-weight:bold;letter-spacing:0.75px">USD/CAD</div>
<div class="a" style="left:749.5px;top:76px;font-size:16px;color:#fff;font-family:'Liberation Serif',serif;letter-spacing:-0.05px">Expires:  Expired</div>
<div class="a" style="left:1706px;top:77px;font-size:12px;color:#fff;letter-spacing:0.4px">May 14 2015</div>
<div class="a" style="left:1790px;top:68px;width:91px;height:25px;background:#cdd0d2"></div>
<div class="a" style="left:1799px;top:73px;font-size:18px;color:#f30;font-weight:bold;letter-spacing:0.2px">11:30:16</div>
<div class="a" style="left:453px;top:124px;font-size:11px;color:#444">Transaction ID:</div>
<div class="a" style="left:557.5px;top:124px;font-size:12px;color:#000;letter-spacing:0.1px">10589656</div>
<div class="a" style="left:452px;top:148px;font-size:11px;color:#444">Purchased at:</div>
<div class="a" style="left:557.5px;top:148px;font-size:12px;color:#000;letter-spacing:0.5px">14/05 11:13</div>
<div class="a" style="left:452px;top:172px;font-size:11px;color:#444;letter-spacing:-0.05px">Your selection:</div>
<div class="a" style="left:557.5px;top:172px;font-size:12px;color:#000;letter-spacing:1px">Low</div>
<div class="a" style="left:452px;top:196px;font-size:11px;color:#444;letter-spacing:-0.05px">Invested amount:</div>
<div class="a" style="left:558.5px;top:196px;font-size:12px;color:#000;letter-spacing:0.05px">$1,200.00</div>
<div class="a" style="left:636.5px;top:124px;font-size:11px;color:#444;letter-spacing:-0.25px">In the money</div>
<div class="a" style="left:742.5px;top:124px;font-size:12px;color:#000;letter-spacing:0.15px">$2,052.00</div>
<div class="a" style="left:636.5px;top:148px;font-size:11px;color:#444;letter-spacing:-0.15px">Out of the money</div>
<div class="a" style="left:742.5px;top:148px;font-size:12px;color:#000">$0.00</div>
<div class="a" style="left:453px;top:217px;width:400px;height:1px;background:#cfd2d4"></div>
<div class="a" style="left:453px;top:276px;width:400px;height:1px;background:#cfd2d4"></div>
<div class="a" style="left:452.5px;top:231px;font-size:11px;color:#444;letter-spacing:-0.1px">Market:</div>
<div class="a" style="left:557.5px;top:231px;font-size:12px;color:#1a9a3a;letter-spacing:0.35px">1.19539</div>
<div class="a" style="left:453.5px;top:255px;font-size:11px;color:#444;letter-spacing:0.25px">Target:</div>
<div class="a" style="left:557.5px;top:255px;font-size:12px;color:#000;letter-spacing:0.35px">1.19572</div>
<div class="a" style="left:442px;top:319px;font-size:11px;color:#444;letter-spacing:0.25px">Return:</div>
<div class="a" style="left:548.5px;top:318px;font-size:13px;color:#1a9a3a;font-weight:bold;letter-spacing:-0.3px">$2,052.00</div>
<div class="a" style="left:869px;top:111px;width:1px;height:230px;background:#e2e5e8"></div>
<svg class="a" style="left:880px;top:111px" width="1001" height="231" viewBox="0 0 1001 231"><rect width="1001" height="231" fill="#24462e"/><rect width="1001" height="49" fill="#262626"/><g stroke="#a9b8ac" stroke-width="1" stroke-dasharray="1 1" fill="none" shape-rendering="crispEdges"><path d="M0 38.5 H1001"/><path d="M0 76.5 H1001"/><path d="M0 115.5 H1001"/><path d="M0 153.5 H1001"/><path d="M0 192.5 H1001"/><path d="M142.5 0 V231"/><path d="M285.5 0 V231"/><path d="M428.5 0 V231"/><path d="M570.5 0 V231"/><path d="M713.5 0 V231"/><path d="M856.5 0 V231"/><path d="M998.5 0 V231"/><path d="M0 .5 H1001" stroke="#777"/><path d="M.5 0 V231" stroke="#777"/></g><path d="M974 0 V231" stroke="#8a1f1f" stroke-width="2" stroke-opacity=".85"/><path d="M0 49 H1001" stroke="#fff" stroke-width="1.5"/><polyline points="-0.1,132.8 2.7,129.1 8.3,134.8 12.6,142.7 16.8,140.4 32.3,139.8 39.3,149.7 45.0,142.7 57.7,145.5 61.9,152.0 76.0,137.0 78.8,152.5 87.3,155.3 90.1,152.5 94.9,165.2 100.0,161.0 103.3,166.6 111.2,157.6 115.5,159.6 122.5,151.1 125.3,149.1 133.8,149.1 137.2,142.7 142.2,142.1 146.5,136.2 149.3,137.0 151.3,131.9 153.5,134.2 156.3,130.0 159.7,129.4 162.0,136.2 164.8,133.3 168.2,146.9 171.8,148.3 176.1,148.3 179.5,142.7 184.5,142.7 190.2,141.2 193.6,135.6 198.6,134.8 204.8,139.8 209.3,140.4 212.7,153.9 218.4,142.7 221.7,155.3 225.4,159.6 232.5,161.0 237.5,159.0 240.4,165.2 243.7,162.4 249.4,161.0 254.4,164.4 257.8,170.8 262.1,175.1 265.7,184.9 269.1,183.5 274.2,191.1 279.8,181.6 283.2,182.1 291.7,175.1 293.9,175.1 296.7,166.6 299.6,164.6 304.9,175.1 308.0,171.7 310.6,170.8 313.7,164.4 316.5,163.8 322.7,154.5 325.5,155.9 329.7,161.5 332.5,153.4 338.2,153.4 342.4,146.9 345.2,149.7 349.5,163.8 352.3,168.0 357.4,159.6 360.7,151.1 363.6,149.7 367.8,141.2 372.0,131.9 376.2,131.4 380.5,129.1 382.4,134.2 386.1,131.4 388.4,143.2 391.7,139.8 396.0,141.2 400.2,134.8 403.0,142.1 410.1,148.9 412.9,158.2 416.3,160.4 419.4,170.8 422.8,166.6 427.8,139.3 432.6,151.1 436.9,163.8 441.1,172.3 444.5,180.7 447.3,182.1 450.1,182.1 455.2,172.3 458.6,168.0 461.4,160.4 463.6,164.4 466.5,160.1 472.7,160.1 475.5,165.2 478.3,155.3 483.4,155.3 486.2,160.1 491.3,160.1 494.7,167.2 500.0,165.1 503.4,155.2 506.2,159.5 511.3,159.5 514.1,151.0 517.5,148.2 520.3,153.3 525.4,152.4 531.6,145.4 534.4,148.2 539.4,143.4 542.8,142.6 545.6,136.9 548.5,146.8 553.5,145.4 562.0,132.1 566.2,134.7 570.4,143.4 573.3,136.9 578.9,136.9 582.3,120.0 585.9,105.9 589.6,98.0 593.0,98.9 598.6,105.9 602.8,107.3 606.5,108.8 609.9,102.6 612.7,104.0 615.5,103.1 619.8,98.9 625.4,98.0 628.2,101.7 631.9,108.8 635.2,119.2 640.3,125.7 645.1,119.2 648.8,116.4 651.6,108.8 656.4,104.5 662.9,93.3 666.2,92.7 669.1,94.7 680.3,76.3 684.6,78.3 687.4,76.3 691.0,72.1 694.4,75.5 697.2,76.3 702.3,83.4 705.7,77.8 708.5,78.6 711.3,82.0 714.1,76.9 717.0,76.3 719.8,70.1 725.4,71.6 727.1,74.4 730.5,67.3 732.5,68.7 738.1,65.6 739.5,66.5 742.9,63.1 744.6,65.1 747.4,53.8 749.9,51.0 755.0,60.0 759.2,56.1 762.0,54.4 766.3,41.1 769.7,40.6 771.9,48.2 774.7,48.2 777.5,51.0 781.8,50.1 786.0,53.2 787.4,52.4 791.1,56.6 795.9,47.6 799.2,46.2 802.9,42.5 805.7,49.6 808.5,48.2 811.4,39.2 813.6,49.6 815.6,50.1 819.8,44.8 822.6,45.4 825.4,51.0 827.7,60.9 830.2,64.5 833.3,61.7 835.9,63.7 839.0,60.9 842.3,63.7 845.2,67.3 848.5,62.3 850.8,62.3 853.6,66.5 856.4,67.1 858.4,56.6 863.5,55.8 870.5,54.4 874.8,34.1 878.4,33.2 882.6,41.1 886.6,48.7 889.4,45.4 891.7,53.8 894.5,59.4 900.1,62.3 902.9,61.4 905.7,64.5 908.6,64.5 911.9,60.9 917.0,60.9 919.8,56.6 922.7,61.4 928.3,62.3 935.3,67.3 938.2,66.5 942.4,59.4 946.6,67.9 950.8,72.7 953.6,73.5 959.3,71.6 962.1,69.3 964.9,73.0 967.7,72.7 972.0,67.9 976.2,67.3 981.8,69.9 986.1,68.5 995.9,68.7 998.7,73.5 1001.0,69.3" fill="none" stroke="#fff" stroke-width="1.1" stroke-linejoin="round"/><circle cx="886.6" cy="49" r="2.6" fill="#000"/><path d="M888.3 46.3 L890.8 43 L891.2 47 Z" fill="#fff"/><g font-family="'Liberation Sans',sans-serif" font-size="10.4" fill="#fff"><text x="4.3" y="34.6">1.1960</text><text x="4.3" y="73.5">1.1950</text><text x="4.3" y="112.6">1.1940</text><text x="4.3" y="150.6">1.1930</text><text x="4.3" y="189">1.1920</text></g><g font-family="'Liberation Sans',sans-serif" font-size="11" fill="#d5e6d8" text-anchor="middle"><text x="142" y="228">09:29</text><text x="286" y="228">09:49</text><text x="428" y="228">10:09</text><text x="570" y="228">10:29</text><text x="714" y="228">10:49</text><text x="856" y="228">11:09</text></g><rect x="969.6" y="3.7" width="40" height="22.8" fill="#fff" fill-opacity=".5"/><rect x="974" y="7.9" width="25" height="14.2" fill="#fff"/><path d="M998.5 3 V8 M998.5 23 V27" stroke="#fff" stroke-width="1" stroke-dasharray="1 1"/><path d="M975.6 9 V19.8 H998" fill="none" stroke="#808080" stroke-width="1.6"/><path d="M977.5 18.5 L981 12.5 L985 16.5 L988 13.5 L991 17.5 L995 12.5" fill="none" stroke="#858585" stroke-width="1.1"/><path d="M992.6 11.6 L997.4 10.4 L995.8 15 Z" fill="#858585"/></svg>
<div class="a" style="left:432px;top:367px;width:1460px;height:517px;background:#f3f5f7;border:1px solid #dde3e6"></div>
<div class="a" style="left:438px;top:405px;width:1460px;height:473px;border:1px solid #dfe5e8"></div>
<div class="a dk" style="left:575px;top:368px;width:1306px;height:31px;"></div>
<div class="a" style="left:433px;top:368px;width:142px;height:36px;background:linear-gradient(#e6e9ec,#f3f5f7)"></div>
<div class="a" style="left:448px;top:379px;font-size:14px;color:#000;letter-spacing:0.1px">OPEN TRADES (0)</div>
<div class="a" style="left:592.5px;top:378px;font-size:14px;color:#fff">TRADE HISTORY</div>
<div class="a" style="left:724.5px;top:378px;font-size:14px;color:#fff;letter-spacing:0.1px">PROMOTIONS</div>
<div class="a" style="left:840.5px;top:378px;font-size:14px;color:#fff;letter-spacing:0.2px">FOREX</div>
<div class="a" style="left:912.5px;top:378px;font-size:14px;color:#fff;letter-spacing:0.2px">ELITE CLUB</div>
<div class="a" style="left:1016px;top:378px;font-size:14px;color:#fff;letter-spacing:-0.35px">TOURNAMENT</div>
<div class="a" style="left:709px;top:368px;width:1px;height:31px;background:rgba(255,255,255,.2);box-shadow:-1px 0 0 rgba(0,0,0,.15)"></div>
<div class="a" style="left:1773px;top:378px;font-size:12px;color:#fff;letter-spacing:0.3px">Notifications (0)</div>
<div class="a" style="left:1868.5px;top:382px;border:4px solid transparent;border-top:4px solid #fff;border-bottom:none"></div>
<div class="a th" style="left:439px;top:406px;width:1433px;height:24px;"></div>
<div class="a" style="left:451px;top:413px;font-size:12px;color:#fff;letter-spacing:-0.1px">Trade Details</div>
<div class="a" style="left:737.5px;top:413px;font-size:12px;color:#fff;letter-spacing:0.15px">Amount</div>
<div class="a" style="left:954.5px;top:413px;font-size:12px;color:#fff;letter-spacing:0.15px">Target</div>
<div class="a" style="left:1168.5px;top:413px;font-size:12px;color:#fff;letter-spacing:0.05px">Market</div>
<div class="a" style="left:1383.5px;top:413px;font-size:12px;color:#fff;letter-spacing:-0.3px">Expiry</div>
<div class="a" style="left:1600.5px;top:413px;font-size:12px;color:#fff;letter-spacing:-0.5px">Close</div>
<div class="a" style="left:439px;top:430px;width:1433px;height:29px;background:#b1d9ec;border-bottom:1px solid #c5d0d6"></div>
<div class="a" style="left:727px;top:406px;width:1px;height:24px;background:#e6f1f7"></div>
<div class="a" style="left:728px;top:430px;width:1px;height:28px;background:#dce1e3"></div>
<div class="a" style="left:942px;top:406px;width:1px;height:24px;background:#e6f1f7"></div>
<div class="a" style="left:943px;top:430px;width:1px;height:28px;background:#dce1e3"></div>
<div class="a" style="left:1158px;top:406px;width:1px;height:24px;background:#e6f1f7"></div>
<div class="a" style="left:1159px;top:430px;width:1px;height:28px;background:#dce1e3"></div>
<div class="a" style="left:1373px;top:406px;width:1px;height:24px;background:#e6f1f7"></div>
<div class="a" style="left:1374px;top:430px;width:1px;height:28px;background:#dce1e3"></div>
<div class="a" style="left:1589px;top:406px;width:1px;height:24px;background:#e6f1f7"></div>
<div class="a" style="left:1590px;top:430px;width:1px;height:28px;background:#dce1e3"></div>
<div class="a" style="left:496px;top:430px;width:1px;height:28px;background:#c9e3ef"></div>
<svg class="a" style="left:461px;top:436px" width="13" height="17" viewBox="0 0 13 17"><path d="M5 1 H8 V9 H11.5 L6.5 16 L1.5 9 H5 Z" fill="#0078ae"/></svg>
<div class="a" style="left:520px;top:439px;font-size:12px;color:#000;font-weight:bold;letter-spacing:0.5px">USD/CAD</div>
<div class="a" style="left:738px;top:439px;font-size:12px;color:#777;letter-spacing:0.2px">$1,200.00</div>
<div class="a" style="left:954px;top:439px;font-size:12px;color:#777;letter-spacing:0.4px">1.19572</div>
<div class="a" style="left:1168.5px;top:439px;font-size:12px;color:#1a9a3a;letter-spacing:0.4px">1.19539</div>
<div class="a" style="left:1384.5px;top:439px;font-size:12px;color:#666;letter-spacing:0.3px">Return: $2,052.00</div>
<div class="a" style="left:1600px;top:439px;font-size:12px;color:#777;letter-spacing:1.2px">N/A</div>
<div class="a" style="left:1873px;top:406px;width:8px;height:471px;background:#e6e8ea"></div>
<div class="a" style="left:1874px;top:411px;border:4px solid transparent;border-bottom:4px solid #555;border-top:none"></div>
<div class="a" style="left:1877px;top:866px;border:4px solid transparent;border-top:4px solid #555;border-bottom:none"></div>
<div class="a" style="left:1853px;top:745px;width:32px;height:42px;background:#6d6e72;border:1px solid #fff"></div>
<svg class="a" style="left:1860px;top:752px" width="21" height="28" viewBox="0 0 21 28"><path d="M2 3 Q2 2 3 2 H21 V18 H12 Q10 18 10 20 L5 24 L6 18 H3 Q2 18 2 17 Z" fill="#fff"/><rect x="11" y="19" width="10" height="3.5" rx="1.5" fill="#fff"/></svg>
<div class="a" style="left:1853px;top:790px;width:32px;height:42px;background:#6d6e72;border:1px solid #fff"></div>
<svg class="a" style="left:1860px;top:798px" width="21" height="26" viewBox="0 0 21 26"><path d="M2 3.5 H21 V21.5 H3 Q2 21.5 2 20.5 Z" fill="#fff"/><path d="M2 4.5 L15.5 14.5 L21 10.5" fill="none" stroke="#6d6e72" stroke-width="1.8"/></svg>
</body></html>
